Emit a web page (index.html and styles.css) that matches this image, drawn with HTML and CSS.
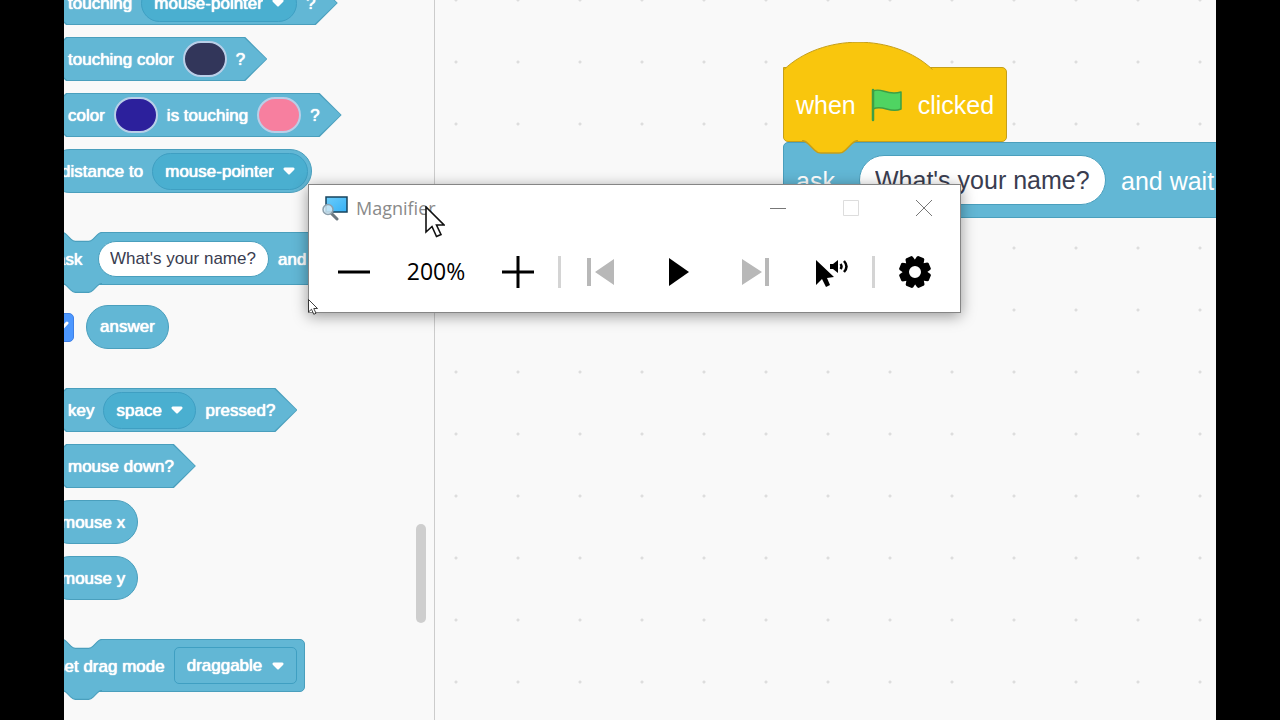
FILE: index.html
```html
<!DOCTYPE html>
<html lang="en">
<head>
    <meta charset="UTF-8">
    <meta name="viewport" content="width=device-width, initial-scale=1.0">
    <title>Scratch - Magnifier</title>
    <link rel="stylesheet" href="styles.css">
</head>
<body>
    <!-- Shapes used by several blocks -->
    <svg class="defs" aria-hidden="true">
        <symbol id="tab" viewBox="0 0 36 9">
            <path d="M0 .4C2 .4 3 1.4 4 2.4L8 6.4C9 7.4 10 8.4 12 8.4H24C26 8.4 27 7.4 28 6.4L32 2.4C33 1.4 34 .4 36 .4V0H0Z"/>
            <path class="edge" d="M0 .4C2 .4 3 1.4 4 2.4L8 6.4C9 7.4 10 8.4 12 8.4H24C26 8.4 27 7.4 28 6.4L32 2.4C33 1.4 34 .4 36 .4"/>
        </symbol>
        <symbol id="arrow" viewBox="0 0 12 8">
            <path d="M2 .5H10C11.7 .5 12 2 11 3L7 7Q6 8 5 7L1 3C0 2 .3 .5 2 .5Z"/>
        </symbol>
        <symbol id="pointer" viewBox="0 0 20 32">
            <path d="M1 1V26L7 20.5L11.5 30.5L16 28.5L11.5 19H19Z" fill="#fff" stroke="#111" stroke-width="1.6"/>
        </symbol>
    </svg>

    <main class="editor">
        <!-- Block palette -->
        <section class="palette">
            <div class="block boolean">
                <span>touching</span>
                <label class="dropdown"><select aria-label="touching"><option>mouse-pointer</option></select><svg><use href="#arrow"/></svg></label>
                <span>?</span>
            </div>
            <div class="block boolean">
                <span>touching color</span>
                <button class="color navy" aria-label="color"></button>
                <span>?</span>
            </div>
            <div class="block boolean">
                <span>color</span>
                <button class="color blue" aria-label="first color"></button>
                <span>is touching</span>
                <button class="color pink" aria-label="second color"></button>
                <span>?</span>
            </div>
            <div class="block reporter tight">
                <span>distance to</span>
                <label class="dropdown"><select aria-label="distance to"><option>mouse-pointer</option></select><svg><use href="#arrow"/></svg></label>
            </div>

            <div class="block stack group">
                <svg class="notch"><use href="#tab"/></svg>
                <label class="verb" for="ask-palette">ask</label>
                <input type="text" id="ask-palette" value="What's your name?">
                <span>and wait</span>
                <svg class="tab"><use href="#tab"/></svg>
            </div>
            <div class="monitor">
                <span class="check">
                    <input type="checkbox" id="answer" checked>
                    <svg viewBox="0 0 29 29"><path d="M7 14L13 20L22 10"/></svg>
                </span>
                <label class="block reporter" for="answer">answer</label>
            </div>

            <div class="block boolean group">
                <span>key</span>
                <label class="dropdown"><select aria-label="key"><option>space</option></select><svg><use href="#arrow"/></svg></label>
                <span>pressed?</span>
            </div>
            <div class="block boolean"><span>mouse down?</span></div>
            <div class="block reporter"><span>mouse x</span></div>
            <div class="block reporter"><span>mouse y</span></div>

            <div class="block stack group">
                <svg class="notch"><use href="#tab"/></svg>
                <span>set drag mode</span>
                <label class="dropdown square"><select aria-label="drag mode"><option>draggable</option></select><svg><use href="#arrow"/></svg></label>
                <svg class="tab"><use href="#tab"/></svg>
            </div>
            <div class="scrollbar"></div>
        </section>

        <!-- Script area -->
        <section class="canvas">
            <div class="script">
                <div class="block stack hat">
                    <svg class="cap" viewBox="0 0 150 28">
                        <path d="M.5 28C39 -9 111 -9 149.5 27.5V28Z"/>
                        <path class="edge" d="M.5 28C39 -9 111 -9 149.5 27.5"/>
                    </svg>
                    <span>when</span>
                    <svg class="flag" viewBox="0 0 32 34">
                        <path d="M2 3C11-1 15 8 30 4V21C19 26 12 16 2 21Z" fill="#4fd462" stroke="#3d9f45" stroke-width="1.5" stroke-linejoin="round"/>
                        <path d="M2 2V32" stroke="#3d9f45" stroke-width="2.5" stroke-linecap="round"/>
                    </svg>
                    <span>clicked</span>
                    <svg class="tab"><use href="#tab"/></svg>
                </div>
                <div class="block stack">
                    <label class="verb" for="ask-script">ask</label>
                    <input type="text" id="ask-script" value="What's your name?">
                    <span>and wait</span>
                </div>
            </div>
        </section>

        <!-- Magnifier window -->
        <div class="magnifier">
            <header class="titlebar">
                <svg class="logo" viewBox="0 0 26 26">
                    <defs>
                        <linearGradient id="screen" x1="0" y1="0" x2="1" y2="1">
                            <stop offset="0" stop-color="#6bcdfb"/>
                            <stop offset="1" stop-color="#35b0f5"/>
                        </linearGradient>
                    </defs>
                    <rect x="4" y="2" width="21" height="15" fill="url(#screen)" stroke="#17435c" stroke-width="1.5"/>
                    <path d="M9 18L15 24" stroke="#6d7880" stroke-width="3" stroke-linecap="round"/>
                    <circle cx="6" cy="14.5" r="5" fill="#cfe8f5" fill-opacity=".85" stroke="#8b9fac" stroke-width="1.5"/>
                </svg>
                <h1>Magnifier</h1>
                <button aria-label="Minimize"><svg viewBox="0 0 16 16"><path d="M0 8.5H16"/></svg></button>
                <button aria-label="Maximize" disabled><svg viewBox="0 0 16 16"><path d="M.5 .5H15.5V15.5H.5Z"/></svg></button>
                <button aria-label="Close"><svg viewBox="0 0 16 16"><path d="M0 0L16 16M16 0L0 16"/></svg></button>
            </header>
            <div class="toolbar">
                <button aria-label="Zoom out"><svg viewBox="0 0 32 32"><path d="M0 14.5H32V17.5H0Z"/></svg></button>
                <output>200%</output>
                <button aria-label="Zoom in"><svg viewBox="0 0 32 32"><path d="M0 14.5H14.5V0H17.5V14.5H32V17.5H17.5V32H14.5V17.5H0Z"/></svg></button>
                <i class="divider"></i>
                <div class="reading">
                    <button aria-label="Previous sentence" disabled><svg viewBox="0 0 32 32"><path d="M2 2H6V30H2ZM29 3V29L10 16Z"/></svg></button>
                    <button aria-label="Play"><svg viewBox="0 0 32 32"><path d="M7 2L27 16L7 30Z"/></svg></button>
                    <button aria-label="Next sentence" disabled><svg viewBox="0 0 32 32"><path d="M26 2H30V30H26ZM3 3V29L23 16Z"/></svg></button>
                    <button aria-label="Read from here">
                        <svg viewBox="0 0 32 32">
                            <path d="M0 4L18 21L11 22L14 29L10 31L6 23L0 29Z"/>
                            <path d="M14 8H17L22 4V17L17 13H14Z"/>
                            <path d="M24.5 8Q26.5 10.5 24.5 13M28 5Q33 10.5 28 16" fill="none" stroke="#000" stroke-width="2.5"/>
                        </svg>
                    </button>
                </div>
                <i class="divider"></i>
                <button aria-label="Settings">
                    <svg viewBox="-16 -16 32 32">
                        <path id="teeth" d="M-4 -15L-3 -16H3L4 -15L5 -10H-5ZM-5 10H5L4 15L3 16H-3L-4 15Z" transform="rotate(22)"/>
                        <use href="#teeth" transform="rotate(45)"/>
                        <use href="#teeth" transform="rotate(90)"/>
                        <use href="#teeth" transform="rotate(135)"/>
                        <circle r="9" fill="none" stroke="#000" stroke-width="6"/>
                    </svg>
                </button>
            </div>
            <svg class="cursor large"><use href="#pointer"/></svg>
            <svg class="cursor small"><use href="#pointer"/></svg>
        </div>
    </main>
</body>
</html>
```
FILE: styles.css
```css
* {
    box-sizing: border-box;
}
body {
    margin: 0;
    padding: 0 5%;
    background: #000;
    font-family: "Liberation Sans", Arial, sans-serif;
}
button, input, select {
    margin: 0;
    padding: 0;
    border: 0;
    background: none;
    color: inherit;
    font: inherit;
}
.defs {
    position: absolute;
    width: 0;
    height: 0;
}
.editor {
    position: relative;
    display: flex;
    height: 100vh;
    overflow: hidden;
    background: #f9f9f9;
}

/* Palette */
.palette {
    position: relative;
    flex: 0 0 371px;
    display: flex;
    flex-direction: column;
    align-items: flex-start;
    gap: 12px;
    margin-top: -19px;
    overflow: hidden;
    border-right: 1px solid #ccc;
    color: #fff;
    font-size: 17px;
}
.group {
    margin-top: 27px;
}
.scrollbar {
    position: absolute;
    top: 543px;
    right: 8px;
    width: 10px;
    height: 99px;
    border-radius: 5px;
    background: #cecece;
}

/* Blocks */
.block {
    --fill: #62b7d5;
    --line: #4a9fbd;
    position: relative;
    flex-shrink: 0;
    display: flex;
    align-items: center;
    gap: 9px;
    height: 44px;
    white-space: nowrap;
}
.palette .block {
    text-shadow: 0 0 1px #fff, 0 0 1px #fff;
}
.block > span, .verb {
    padding-top: 2px;
}
.boolean {
    z-index: 0;
    margin-left: -20px;
    padding: 0 22px 0 24px;
    background: var(--line);
    clip-path: polygon(22px 0, calc(100% - 22px) 0, 100% 50%, calc(100% - 22px) 100%, 22px 100%, 0 50%);
}
.boolean::before {
    content: "";
    position: absolute;
    inset: 1px;
    z-index: -1;
    background: var(--fill);
    clip-path: polygon(22px 0, calc(100% - 22px) 0, 100% 50%, calc(100% - 22px) 100%, 22px 100%, 0 50%);
}
.reporter {
    margin-left: -16px;
    padding: 0 12px;
    border: 1px solid var(--line);
    border-radius: 22px;
    background: var(--fill);
}
.tight {
    padding-right: 3px;
}
.stack {
    height: 53px;
    margin-left: -16px;
    padding: 0 7px;
    border: 1px solid var(--line);
    border-radius: 5px;
    background: var(--fill);
}
.notch, .tab {
    position: absolute;
    left: 13px;
    width: 40px;
    height: 10px;
    fill: var(--fill);
}
.notch {
    top: -1px;
    fill: #f9f9f9;
}
.tab {
    top: calc(100% - 1px);
    z-index: 1;
}
.edge {
    fill: none;
    stroke: var(--line);
}
.verb {
    min-width: 33px;
}
.block input {
    width: 171px;
    height: 36px;
    padding: 0 11px;
    border: 1px solid var(--line);
    border-radius: 18px;
    background: #fff;
    color: #3a3d50;
    text-shadow: none;
}
.dropdown {
    display: flex;
    align-items: center;
    gap: 9px;
    height: 37px;
    padding: 0 12px;
    border: 1px solid #3f9fc2;
    border-radius: 19px;
    background: #4aafd0;
}
.dropdown select {
    appearance: none;
    text-shadow: inherit;
}
.dropdown svg {
    width: 12px;
    height: 8px;
    fill: #fff;
}
.square {
    border-radius: 5px;
    background: none;
}
.color {
    width: 44px;
    height: 36px;
    border: 2px solid #b9cfe8;
    border-radius: 18px;
}
.navy {
    background: #32365a;
}
.blue {
    background: #2c209c;
}
.pink {
    background: #f77f9f;
}
.monitor {
    display: flex;
    align-items: center;
    gap: 12px;
    margin: 8px 0 0 -19px;
}
.monitor .block {
    margin: 0;
    padding: 0 13px;
}
.check {
    position: relative;
    height: 29px;
}
.check input {
    appearance: none;
    width: 29px;
    height: 29px;
    border: 1px solid #3f80e6;
    border-radius: 5px;
    background: #4c97ff;
}
.check svg {
    position: absolute;
    inset: 0;
    fill: none;
    stroke: #fff;
    stroke-width: 3;
    stroke-linecap: round;
    pointer-events: none;
}

/* Script area */
.canvas {
    flex: 1;
    min-width: 0;
    padding: 67px 0 0 348px;
    overflow: hidden;
    background-image: radial-gradient(circle, #ddd 1px, transparent 2px);
    background-position: -10px 31px;
    background-size: 62px 62px;
}
.script {
    display: flex;
    flex-direction: column;
    align-items: flex-start;
    color: #fff;
    font-size: 25px;
}
.script .block {
    gap: 15px;
    height: 76px;
    margin: 0;
    padding: 0 12px;
}
.script .hat {
    --fill: #f9c60d;
    --line: #c59f1a;
    height: 75px;
    border-top-left-radius: 0;
}
.script .verb {
    min-width: 48px;
}
.script .block input {
    width: 247px;
    height: 50px;
    padding: 0 15px;
    border-radius: 25px;
}
.script .tab {
    left: 18px;
    width: 56px;
    height: 14px;
}
.cap {
    position: absolute;
    bottom: calc(100% - 2px);
    left: -1px;
    width: 150px;
    height: 28px;
    fill: var(--fill);
}
.flag {
    width: 32px;
    height: 34px;
}

/* Magnifier window */
.magnifier {
    position: absolute;
    top: 184px;
    left: 244px;
    width: 653px;
    border: 1px solid #858585;
    background: #fff;
    box-shadow: 0 3px 14px rgba(0, 0, 0, 0.4);
    font-family: "Open Sans", "Noto Sans", sans-serif;
}
.titlebar {
    display: flex;
    align-items: center;
    height: 46px;
    padding-left: 13px;
    color: #8a8a8a;
}
.titlebar h1 {
    flex: 1;
    margin: 0 0 0 8px;
    font-size: 18px;
    font-weight: 400;
}
.titlebar button {
    display: grid;
    place-items: center;
    width: 73px;
    height: 46px;
}
.titlebar button svg {
    width: 16px;
    height: 16px;
    fill: none;
    stroke: #777;
}
.titlebar button:disabled svg {
    stroke: #ddd;
}
.logo {
    width: 26px;
    height: 26px;
}
.toolbar {
    display: flex;
    align-items: center;
    height: 81px;
    padding: 0 19px;
    color: #000;
}
.toolbar button {
    display: grid;
    place-items: center;
    width: 52px;
    height: 52px;
}
.toolbar button svg {
    width: 32px;
    height: 32px;
}
.toolbar button:disabled svg {
    fill: #b8b8b8;
}
.toolbar output {
    flex: 1;
    padding-bottom: 2px;
    font-size: 23px;
    text-align: center;
}
.reading {
    display: flex;
    gap: 25px;
}
.divider {
    width: 3px;
    height: 32px;
    margin: 0 14px;
    background: #d4d4d4;
}
.cursor {
    position: absolute;
}
.large {
    top: 21px;
    left: 116px;
    width: 20px;
    height: 32px;
}
.small {
    top: 114px;
    left: -1px;
    width: 10px;
    height: 16px;
}
```
